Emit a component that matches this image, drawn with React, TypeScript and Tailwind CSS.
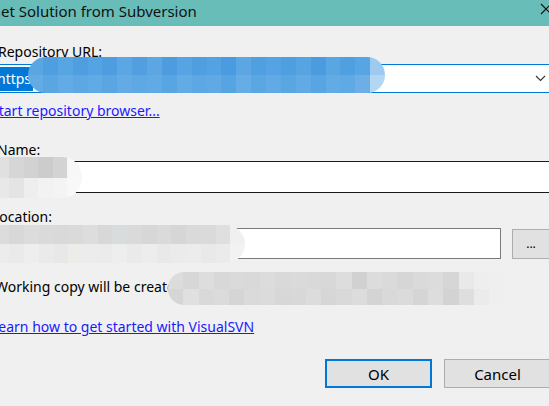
import React from "react";

type Blob = { x: number; y: number; w: number; h: number; rows: string[][]; radius?: string };

function Mosaic({ x, y, w, h, rows, radius }: Blob) {
  return (
    <div
      className="absolute overflow-hidden flex flex-col"
      style={{ left: x, top: y, width: w, height: h, borderRadius: radius ?? `${h / 2}px` }}
    >
      {rows.map((r, i) => (
        <div key={i} className="flex flex-1">
          {r.map((c, j) => (
            <div key={j} className="flex-1" style={{ background: c }} />
          ))}
        </div>
      ))}
    </div>
  );
}

const blues1 = ["#5aa6e2", "#4f9fe0", "#58a5e3", "#4f9ee0", "#55a3e2", "#4e9de0", "#5aa7e4", "#519fe0", "#5ba6e3", "#4c9cdf", "#57a4e3", "#4f9fe0", "#53a2e2", "#4a9bdf", "#5ca7e3", "#509fe0", "#55a3e2", "#4f9fe0", "#56a4e2", "#4b9bdf", "#5aa6e3", "#4fa0e1", "#58a5e3", "#9ccaf0"];
const blues2 = ["#63abe5", "#5aa6e3", "#63abe6", "#5da8e4", "#60aae5", "#5aa6e3", "#64abe5", "#5ea8e4", "#62aae5", "#58a5e3", "#63abe5", "#5ca7e4", "#60a9e5", "#56a4e2", "#66ace6", "#5ba7e4", "#61aae5", "#5aa6e3", "#62aae5", "#58a5e3", "#63abe5", "#5fa9e4", "#6daee6", "#b3d6f3"];

export default function App() {
  return (
    <div className="relative w-[549px] h-[406px] overflow-hidden bg-[#f0f0f0] text-[#000]" style={{ fontFamily: '"Noto Sans", "Liberation Sans", sans-serif' }}>
      {/* title bar */}
      <div className="h-[26px] bg-[#68bdb9] flex items-center justify-between">
        <div className="text-[15px] leading-[20px] text-[#111] ml-[-10px] mt-[-4px]">Get Solution from Subversion</div>
        <svg width="12" height="12" viewBox="0 0 12 12" className="mr-[-3px] mt-[-8px]">
          <path d="M1 1 L11 11 M11 1 L1 11" stroke="#111" strokeWidth="1.2" />
        </svg>
      </div>

      <div className="ml-[-2px] flex flex-col text-[14px] leading-[20px]">
        <div className="mt-[16px]">Repository URL:</div>
        <div className="mt-[2px] ml-[-10px] mr-[-20px] h-[29px] border border-[#0078d7] bg-white flex items-center">
          <span className="ml-[7px] bg-[#0078d7] text-white leading-[24px] pl-[1px] pr-[2px]">https</span>
          <div className="flex-1" />
          <svg width="11" height="7" viewBox="0 0 11 7" className="mr-[22px]">
            <path d="M1 1 L5.5 5.5 L10 1" stroke="#333" strokeWidth="1.1" fill="none" />
          </svg>
        </div>
        <div className="mt-[8px] ml-[-7px]">
          <a className="text-[#1a1aff] underline">Start repository browser...</a>
        </div>
        <div className="mt-[19px] ml-[-1px]">Name:</div>
        <div className="mt-[1px] ml-[-10px] mr-[-20px] h-[32px] border-y border-[#1a1a1a] bg-white" />
        <div className="mt-[14px] ml-[-6px]">Location:</div>
        <div className="mt-[1px] ml-[-10px] flex items-center gap-[11px]">
          <div className="shrink-0 w-[513px] h-[31px] border border-[#7a7a7a] bg-white" />
          <div className="shrink-0 w-[50px] h-[30px] border border-[#adadad] bg-[#e1e1e1] text-[12px] leading-[16px] flex items-center justify-center pr-[12px]">...</div>
        </div>
        <div className="mt-[18px] ml-[-3px]">Working copy will be created</div>
        <div className="mt-[20px] ml-[-7px]">
          <a className="text-[#1a1aff] underline">Learn how to get started with VisualSVN</a>
        </div>
        <div className="mt-[22px] flex justify-end gap-[12px] mr-[-20px] text-[15px]">
          <div className="shrink-0 w-[107px] h-[29px] border-2 border-[#0078d7] bg-[#e1e1e1] flex items-center justify-center">OK</div>
          <div className="shrink-0 w-[125px] h-[29px] border border-[#adadad] bg-[#e1e1e1] flex items-center justify-center pr-[18px]">Cancel</div>
        </div>
      </div>

      {/* privacy mosaics */}
      <Mosaic x={28} y={57} w={357} h={36} rows={[blues1, blues2]} />
      <Mosaic x={-20} y={157} w={102} h={41} radius="20px" rows={[
        ["#e6e6e6", "#e0e0e0", "#d6d6d6", "#d2d2d2", "#cccccc", "#d3d3d3", "#f7f7f7"],
        ["#ececec", "#e8e8e8", "#e4e4e4", "#eeeeee", "#f2f2f2", "#f4f4f4", "#f8f8f8"],
      ]} />
      <Mosaic x={-20} y={225} w={265} h={38} radius="19px" rows={[
        ["#e2e2e2", "#dcdcdc", "#d8d8d8", "#dcdcdc", "#dadada", "#d9d9d9", "#dadada", "#dddddd", "#d8d8d8", "#d9dcdc", "#dadada", "#d7d7d7", "#dadada", "#d6d6d6", "#dadada", "#dadada", "#dfdfdf", "#f0f0f0"],
        ["#e7e7e7", "#ececec", "#eaeaea", "#eeeeec", "#eaeaea", "#e6e8ea", "#eeece9", "#ececec", "#ebebeb", "#eeeeee", "#eaeaea", "#ededed", "#e9e9e9", "#ebebeb", "#ececec", "#e9e9e9", "#ebebeb", "#f2f2f2"],
      ]} />
      <Mosaic x={168} y={272} w={352} h={33} radius="16px" rows={[
        ["#dcdcdc", "#d7d7d7", "#dddddd", "#d8d8d8", "#dadada", "#d9d9d9", "#dcdcdc", "#d9d9d9", "#dadada", "#d9d9d9", "#d8d8d8", "#dddddd", "#d1d1d1", "#dcdcdc", "#dadada", "#d6d6d6", "#dadada", "#dcdcdc", "#d6d6d6", "#e9e9e9", "#eeeeee", "#efefef", "#f0f0f0"],
        ["#d6d6d6", "#e0e0e0", "#d9d9d9", "#dbdbdb", "#d5d5d5", "#dadada", "#dbdbdb", "#d7d7d7", "#d8d8d8", "#dcdcdc", "#d6d6d6", "#d9d9d9", "#dcdcdc", "#d4d4d4", "#d9d9d9", "#dbdbdb", "#d5d5d5", "#dddddd", "#d3d3d3", "#dedede", "#ebebeb", "#efefef", "#f0f0f0"],
      ]} />
    </div>
  );
}
